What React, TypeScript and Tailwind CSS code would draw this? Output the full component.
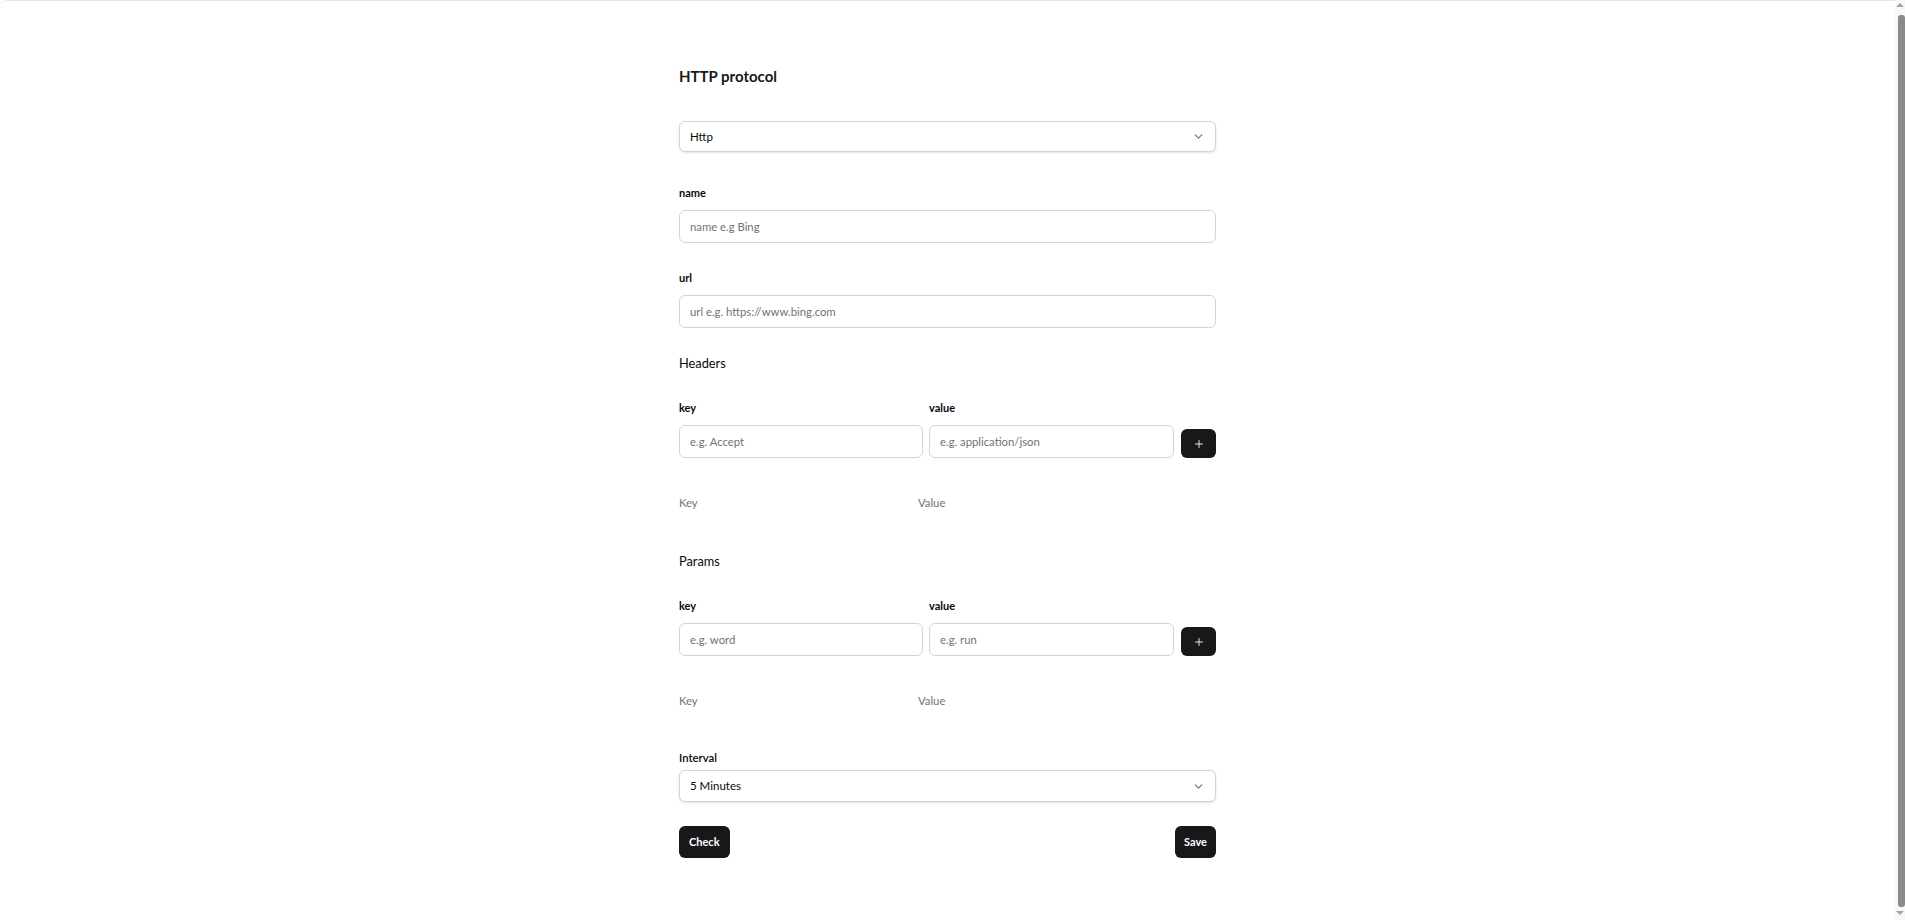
import { ChevronDown, Plus } from "lucide-react";

const font = { fontFamily: 'Lato, "Noto Sans", sans-serif' };

function SelectBox({ value, className }: { value: string; className: string }) {
  return (
    <div
      className={`flex items-center justify-between w-full rounded-md border border-[#d4d4d8] bg-white px-[10px] text-[11.5px] text-[#09090b] shadow-sm ${className}`}
    >
      <span>{value}</span>
      <ChevronDown className="w-[13px] h-[13px] text-[#71717a]" strokeWidth={2} />
    </div>
  );
}

function TextInput({ placeholder, className = "" }: { placeholder: string; className?: string }) {
  return (
    <input
      type="text"
      placeholder={placeholder}
      className={`h-[33px] w-full rounded-md border border-[#d4d4d8] bg-white px-[10px] text-[11.3px] text-[#09090b] placeholder:text-[#71717a] outline-none ${className}`}
    />
  );
}

function KeyValueSection({
  title,
  keyPlaceholder,
  valuePlaceholder,
}: {
  title: string;
  keyPlaceholder: string;
  valuePlaceholder: string;
}) {
  return (
    <div className="flex flex-col">
      <h3 className="text-[12.8px] leading-[18px] text-[#09090b]">{title}</h3>

      <div className="mt-[28px] flex items-end gap-[6px]">
        <div className="flex flex-col w-[244px]">
          <label className="text-[11px] leading-[16px] font-bold text-[#09090b]">key</label>
          <TextInput placeholder={keyPlaceholder} className="mt-[9px]" />
        </div>
        <div className="flex flex-col w-[245px]">
          <label className="text-[11px] leading-[16px] font-bold text-[#09090b]">value</label>
          <TextInput placeholder={valuePlaceholder} className="mt-[9px]" />
        </div>
        <button className="ml-auto flex h-[29px] w-[35px] items-center justify-center rounded-md bg-[#18181b]">
          <Plus className="w-[12px] h-[12px] text-[#e4e4e7]" strokeWidth={2} />
        </button>
      </div>

      {/* table header for added pairs */}
      <div className="mt-[37px] flex text-[11.3px] leading-[16px] text-[#71717a]">
        <span className="w-[239px]">Key</span>
        <span>Value</span>
      </div>
    </div>
  );
}

function Scrollbar() {
  return (
    <div className="w-[10px] shrink-0 bg-[#f8f8f8] flex flex-col items-end">
      <div className="mt-[3px] mr-[1px] h-0 w-0 border-x-[4px] border-b-[4px] border-x-transparent border-b-[#a3a3a3]" />
      <div className="mt-[8px] w-[7px] h-[892px] rounded-[3px] bg-[#8a8a8a]" />
      <div className="mt-[4px] mr-[1px] h-0 w-0 border-x-[4px] border-t-[4px] border-x-transparent border-t-[#a3a3a3]" />
    </div>
  );
}

export default function App() {
  return (
    <div className="h-[920px] flex bg-white" style={font}>
      <main className="flex-1 rounded-tl-lg border-t border-[#e5e7eb]">
        <div className="mx-auto w-[537px] flex flex-col pt-[65px] pb-[80px]">
          <h2 className="text-[15px] leading-[21px] font-bold text-[#18181b]">HTTP protocol</h2>

          <SelectBox value="Http" className="mt-[34px] h-[31px]" />

          <label className="mt-[33px] text-[11px] leading-[16px] font-bold text-[#09090b]">name</label>
          <TextInput placeholder="name e.g Bing" className="mt-[9px]" />

          <label className="mt-[27px] text-[11px] leading-[16px] font-bold text-[#09090b]">url</label>
          <TextInput placeholder="url e.g. https://www.bing.com" className="mt-[9px]" />

          <div className="mt-[26px]">
            <KeyValueSection title="Headers" keyPlaceholder="e.g. Accept" valuePlaceholder="e.g. application/json" />
          </div>

          <div className="mt-[41px]">
            <KeyValueSection title="Params" keyPlaceholder="e.g. word" valuePlaceholder="e.g. run" />
          </div>

          <label className="mt-[41px] text-[11.3px] leading-[16px] font-semibold text-[#09090b]">Interval</label>
          <SelectBox value="5 Minutes" className="mt-[4px] h-[32px]" />

          <div className="mt-[24px] flex items-center justify-between">
            <button className="h-[32px] rounded-md bg-[#18181b] px-[10px] text-[11px] font-bold text-white">
              Check
            </button>
            <button className="h-[32px] rounded-md bg-[#18181b] px-[9px] text-[11px] font-bold text-white">
              Save
            </button>
          </div>
        </div>
      </main>
      <Scrollbar />
    </div>
  );
}
